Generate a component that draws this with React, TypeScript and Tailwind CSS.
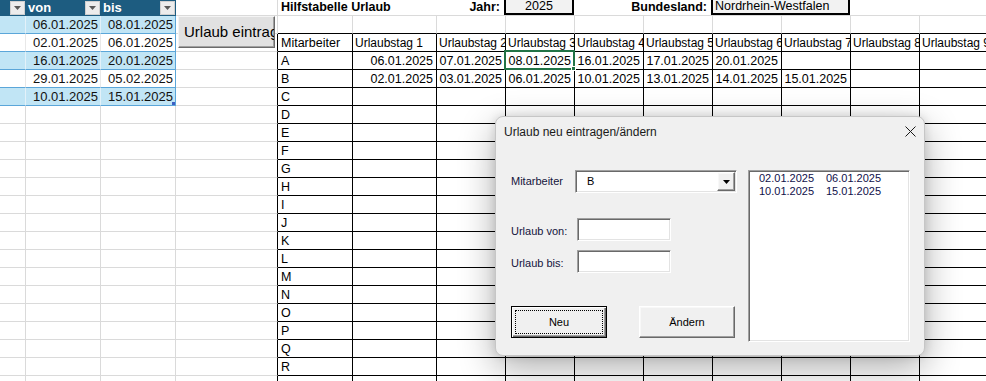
import React from "react";

const names = "ABCDEFGHIJKLMNOPQR".split("");
const data: Record<number, string[]> = {
  3: ["06.01.2025", "07.01.2025", "08.01.2025", "16.01.2025", "17.01.2025", "20.01.2025"],
  4: ["02.01.2025", "03.01.2025", "06.01.2025", "10.01.2025", "13.01.2025", "14.01.2025", "15.01.2025"],
};
const leftRows = [
  ["06.01.2025", "08.01.2025"],
  ["02.01.2025", "06.01.2025"],
  ["16.01.2025", "20.01.2025"],
  ["29.01.2025", "05.02.2025"],
  ["10.01.2025", "15.01.2025"],
];

function Dropdown() {
  return (
    <span className="flex h-[14px] w-[15px] items-center justify-center border border-[#cfcfcf] bg-[#ececec]">
      <svg width="7" height="4" viewBox="0 0 7 4">
        <path d="M0 0h7L3.5 4z" fill="#595959" />
      </svg>
    </span>
  );
}

const GRAY = "border-r border-b border-r-[#dadada] border-b-[#dadada]";

function bodyCell(r: number, c: number) {
  const key = `${r}-${c}`;
  // left table
  if (c <= 2 && r <= 5) {
    const band = r % 2 === 1;
    const bg = band ? "bg-[#c1e5f5]" : "bg-white";
    const br = c === 2 ? "border-r-[#5ba6d9]" : band ? "border-r-[#e3f1f9]" : "border-r-[#e8e8e8]";
    return (
      <div
        key={key}
        className={`relative flex items-center justify-end overflow-hidden whitespace-nowrap border-r border-b border-b-[#5ba6d9] pr-[2px] text-[13px] text-[#111] ${bg} ${br}`}
      >
        {c > 0 ? leftRows[r - 1][c - 1] : ""}
        {c === 2 && r === 5 ? <span className="absolute bottom-0 right-0 h-[3px] w-[3px] bg-[#3d5fc4]" /> : null}
      </div>
    );
  }
  if (c <= 2) return <div key={key} className={GRAY} />;
  if (c === 3) {
    if (r <= 1) return <div key={key} className={GRAY} />;
    return <div key={key} className="border-r border-b border-r-black border-b-[#dadada]" />;
  }
  // hilfstabelle
  if (r === 1) return <div key={key} className="border-r border-b border-r-[#dadada] border-b-black" />;
  const base = "flex items-end whitespace-nowrap border-r border-b border-black text-[12.5px] leading-[16px] text-black";
  if (r === 2) {
    const label = c === 4 ? "Mitarbeiter" : `Urlaubstag ${c - 4}`;
    return (
      <div
        key={key}
        className={`${base} overflow-hidden ${c === 4 ? "pl-[3px]" : "pl-[2px] text-[12px]"} ${c === 5 ? "text-[#3e2a62]" : ""}`}
      >
        {label}
      </div>
    );
  }
  if (c === 4) {
    return (
      <div key={key} className={`${base} overflow-hidden pl-[3px]`}>
        {r - 3 < names.length ? names[r - 3] : ""}
      </div>
    );
  }
  const val = data[r]?.[c - 5] ?? "";
  const selected = r === 3 && c === 7;
  return (
    <div key={key} className={`${base} relative justify-end pr-[3px] ${selected ? "" : "overflow-hidden"}`}>
      {val}
      {selected ? (
        <span className="absolute -left-[2px] -top-[2px] -right-[1px] -bottom-[1px] z-10 border-2 border-[#217346]">
          <span className="absolute -bottom-[3px] -right-[3px] h-[5px] w-[5px] border border-white bg-[#217346]" />
        </span>
      ) : null}
    </div>
  );
}

function Sheet() {
  const cells: React.ReactNode[] = [];
  cells.push(
    <div key="h0" className="flex items-center justify-end bg-[#1d5c80] pr-[1px]">
      <Dropdown />
    </div>
  );
  cells.push(
    <div key="h1" className="flex items-center justify-between bg-[#1d5c80] pl-[2px] pr-[1px] text-[13px] font-bold text-white">
      <span>von</span>
      <Dropdown />
    </div>
  );
  cells.push(
    <div key="h2" className="flex items-center justify-between bg-[#1d5c80] pl-[2px] pr-[1px] text-[13px] font-bold text-white">
      <span>bis</span>
      <Dropdown />
    </div>
  );
  cells.push(<div key="h3" className={GRAY} />);
  cells.push(
    <div key="h4" className="col-span-2 flex items-center whitespace-nowrap border-b border-b-[#dadada] pl-[3px] text-[12.5px] font-bold text-black">
      Hilfstabelle Urlaub
    </div>
  );
  cells.push(
    <div key="h6" className="flex items-center justify-end border-b border-b-[#dadada] pr-[6px] text-[12.5px] font-bold text-black">
      Jahr:
    </div>
  );
  cells.push(
    <div key="h7" className="border-b border-b-[#dadada]">
      <div className="-ml-[2px] mr-[1px] flex h-[15px] items-center justify-center border-x-2 border-b-2 border-black bg-[#f2f2f2] text-[12.5px] text-black">
        2025
      </div>
    </div>
  );
  cells.push(
    <div key="h8" className="col-span-2 flex items-center justify-end border-b border-b-[#dadada] pr-[6px] text-[12.5px] font-bold text-black">
      Bundesland:
    </div>
  );
  cells.push(
    <div key="h10" className="col-span-2 border-b border-b-[#dadada]">
      <div className="-ml-[2px] mr-[1px] flex h-[15px] items-center whitespace-nowrap border-x-2 border-b-2 border-black bg-[#f2f2f2] pl-[2px] text-[12.5px] text-black">
        Nordrhein-Westfalen
      </div>
    </div>
  );
  cells.push(<div key="h12" className="border-b border-b-[#dadada]" />);
  cells.push(<div key="h13" className="border-b border-b-[#dadada]" />);

  for (let r = 1; r < 22; r++) {
    for (let c = 0; c < 14; c++) cells.push(bodyCell(r, c));
  }

  return (
    <div className="grid grid-cols-[26px_75px_75px_102px_75px_84px_69px_69px_69px_69px_69px_69px_69px_69px] grid-rows-[16px_repeat(21,18px)]">
      {cells}
    </div>
  );
}

const SUNKEN =
  "border border-t-[#a0a0a0] border-l-[#a0a0a0] border-r-white border-b-white bg-white shadow-[inset_1px_1px_0_#696969,inset_-1px_-1px_0_#e3e3e3]";
const RAISED =
  "border border-t-white border-l-white border-r-[#696969] border-b-[#696969] bg-[#f0f0f0] shadow-[inset_-1px_-1px_0_#a0a0a0,inset_1px_1px_0_#f8f8f8]";

function Dialog() {
  return (
    <div className="absolute left-[495px] top-[116px] z-20 h-[240px] w-[430px] rounded-[8px] border border-[#c6c6c6] bg-[#f0f0f0] shadow-[0_12px_36px_rgba(0,0,0,0.32),0_0_10px_rgba(0,0,0,0.12)]">
      <div className="flex h-[29px] items-center justify-between pl-[8px] pr-[8px]">
        <span className="text-[12px] text-[#1a1a1a]">Urlaub neu eintragen/ändern</span>
        <svg width="11" height="11" viewBox="0 0 11 11">
          <path d="M0.5 0.5l10 10M10.5 0.5l-10 10" stroke="#1a1a1a" strokeWidth="1" />
        </svg>
      </div>
      <div className="flex pl-[15px] pt-[24px] text-[11px] leading-[13px] text-[#14143c]">
        <div className="flex w-[226px] flex-col">
          <div className="flex h-[23px] items-center">
            <span className="w-[64px]">Mitarbeiter</span>
            <div className={`flex h-[23px] w-[162px] p-[1px] ${SUNKEN}`}>
              <span className="flex flex-1 items-center pl-[10px] text-black">B</span>
              <span className={`flex w-[18px] items-center justify-center ${RAISED}`}>
                <svg width="7" height="4" viewBox="0 0 7 4">
                  <path d="M0 0h7L3.5 4z" fill="#000" />
                </svg>
              </span>
            </div>
          </div>
          <div className="mt-[25px] flex h-[23px] items-center">
            <span className="mt-[4px] w-[66px]">Urlaub von:</span>
            <div className={`h-[23px] w-[94px] ${SUNKEN}`} />
          </div>
          <div className="mt-[9px] flex h-[23px] items-center">
            <span className="mt-[4px] w-[66px]">Urlaub bis:</span>
            <div className={`h-[23px] w-[94px] ${SUNKEN}`} />
          </div>
          <div className="mt-[33px] flex gap-[32px] text-black">
            <div className="flex h-[32px] w-[96px] border border-black bg-[#f0f0f0] p-[1px] shadow-[inset_1px_1px_0_white,inset_-1px_-1px_0_#696969,inset_-2px_-2px_0_#a0a0a0]">
              <span className="m-[2px] flex flex-1 items-center justify-center border border-dotted border-black">Neu</span>
            </div>
            <div className={`flex h-[32px] w-[96px] items-center justify-center ${RAISED}`}>Ändern</div>
          </div>
        </div>
        <div className={`ml-[11px] h-[172px] w-[162px] pl-[10px] pt-[1px] text-[#10104a] ${SUNKEN}`}>
          <div className="flex">
            <span className="w-[67px]">02.01.2025</span>
            <span>06.01.2025</span>
          </div>
          <div className="flex">
            <span className="w-[67px]">10.01.2025</span>
            <span>15.01.2025</span>
          </div>
        </div>
      </div>
    </div>
  );
}

export default function App() {
  return (
    <div className="relative h-[381px] w-[986px] overflow-hidden bg-white font-['Liberation_Sans',Arial,sans-serif]">
      <Sheet />
      <div className="absolute left-[178px] top-[16px] z-10 flex h-[32px] w-[97px] items-center overflow-hidden whitespace-nowrap border border-t-[#f4f4f4] border-l-[#f4f4f4] border-r-[#6b6b6b] border-b-[#6b6b6b] bg-[#e1e1e1] pl-[5px] text-[15px] text-black shadow-[inset_-1px_-1px_0_#a0a0a0]">
        Urlaub eintragen
      </div>
      <Dialog />
    </div>
  );
}
